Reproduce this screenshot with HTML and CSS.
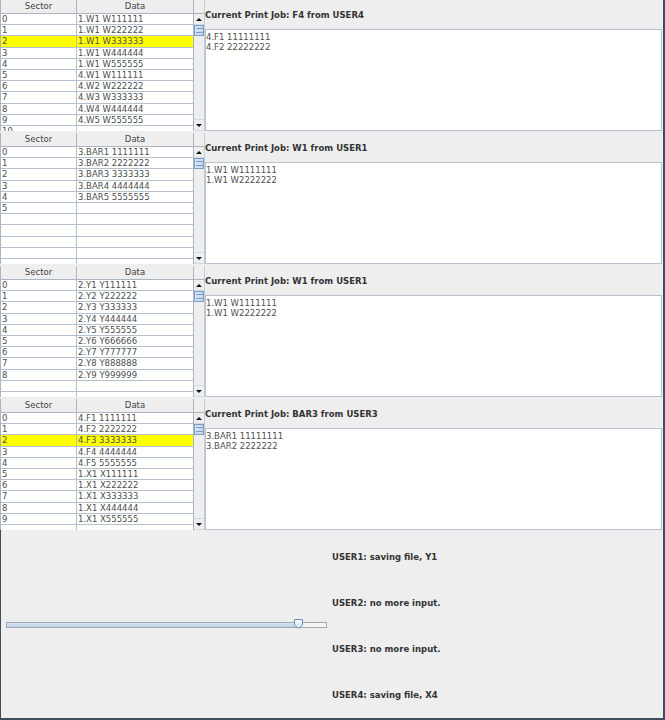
FILE: index.html
```html
<!DOCTYPE html>
<html>
<head>
<meta charset="utf-8">
<link rel="stylesheet" href="styles.css">
</head>
<body>
<div class="window">
  <div class="panels">
    <!-- Panel 1 -->
    <div class="panel">
      <div class="tablepane">
        <div class="tbl">
          <div class="thead"><div class="th c1">Sector</div><div class="th c2">Data</div></div>
          <div class="row"><div class="td c1">0</div><div class="td c2">1.W1 W111111</div></div>
          <div class="row"><div class="td c1">1</div><div class="td c2">1.W1 W222222</div></div>
          <div class="row sel"><div class="td c1">2</div><div class="td c2">1.W1 W333333</div></div>
          <div class="row"><div class="td c1">3</div><div class="td c2">1.W1 W444444</div></div>
          <div class="row"><div class="td c1">4</div><div class="td c2">1.W1 W555555</div></div>
          <div class="row"><div class="td c1">5</div><div class="td c2">4.W1 W111111</div></div>
          <div class="row"><div class="td c1">6</div><div class="td c2">4.W2 W222222</div></div>
          <div class="row"><div class="td c1">7</div><div class="td c2">4.W3 W333333</div></div>
          <div class="row"><div class="td c1">8</div><div class="td c2">4.W4 W444444</div></div>
          <div class="row"><div class="td c1">9</div><div class="td c2">4.W5 W555555</div></div>
          <div class="row"><div class="td c1">10</div><div class="td c2"></div></div>
        </div>
        <div class="vscroll">
          <div class="corner"></div>
          <div class="sbbtn"><span class="arrow-up"></span></div>
          <div class="thumb"><span class="grip"></span></div>
          <div class="track"></div>
          <div class="sbbtn"><span class="arrow-down"></span></div>
        </div>
      </div>
      <div class="jobpane">
        <div class="joblabel">Current Print Job: F4 from USER4</div>
        <div class="textarea">4.F1 11111111<br>4.F2 22222222</div>
      </div>
    </div>

    <!-- Panel 2 -->
    <div class="panel">
      <div class="tablepane">
        <div class="tbl">
          <div class="thead"><div class="th c1">Sector</div><div class="th c2">Data</div></div>
          <div class="row"><div class="td c1">0</div><div class="td c2">3.BAR1 1111111</div></div>
          <div class="row"><div class="td c1">1</div><div class="td c2">3.BAR2 2222222</div></div>
          <div class="row"><div class="td c1">2</div><div class="td c2">3.BAR3 3333333</div></div>
          <div class="row"><div class="td c1">3</div><div class="td c2">3.BAR4 4444444</div></div>
          <div class="row"><div class="td c1">4</div><div class="td c2">3.BAR5 5555555</div></div>
          <div class="row"><div class="td c1">5</div><div class="td c2"></div></div>
          <div class="row"><div class="td c1"></div><div class="td c2"></div></div>
          <div class="row"><div class="td c1"></div><div class="td c2"></div></div>
          <div class="row"><div class="td c1"></div><div class="td c2"></div></div>
          <div class="row"><div class="td c1"></div><div class="td c2"></div></div>
          <div class="row"><div class="td c1"></div><div class="td c2"></div></div>
        </div>
        <div class="vscroll">
          <div class="corner"></div>
          <div class="sbbtn"><span class="arrow-up"></span></div>
          <div class="thumb"><span class="grip"></span></div>
          <div class="track"></div>
          <div class="sbbtn"><span class="arrow-down"></span></div>
        </div>
      </div>
      <div class="jobpane">
        <div class="joblabel">Current Print Job: W1 from USER1</div>
        <div class="textarea">1.W1 W1111111<br>1.W1 W2222222</div>
      </div>
    </div>

    <!-- Panel 3 -->
    <div class="panel">
      <div class="tablepane">
        <div class="tbl">
          <div class="thead"><div class="th c1">Sector</div><div class="th c2">Data</div></div>
          <div class="row"><div class="td c1">0</div><div class="td c2">2.Y1 Y111111</div></div>
          <div class="row"><div class="td c1">1</div><div class="td c2">2.Y2 Y222222</div></div>
          <div class="row"><div class="td c1">2</div><div class="td c2">2.Y3 Y333333</div></div>
          <div class="row"><div class="td c1">3</div><div class="td c2">2.Y4 Y444444</div></div>
          <div class="row"><div class="td c1">4</div><div class="td c2">2.Y5 Y555555</div></div>
          <div class="row"><div class="td c1">5</div><div class="td c2">2.Y6 Y666666</div></div>
          <div class="row"><div class="td c1">6</div><div class="td c2">2.Y7 Y777777</div></div>
          <div class="row"><div class="td c1">7</div><div class="td c2">2.Y8 Y888888</div></div>
          <div class="row"><div class="td c1">8</div><div class="td c2">2.Y9 Y999999</div></div>
          <div class="row"><div class="td c1"></div><div class="td c2"></div></div>
          <div class="row"><div class="td c1"></div><div class="td c2"></div></div>
        </div>
        <div class="vscroll">
          <div class="corner"></div>
          <div class="sbbtn"><span class="arrow-up"></span></div>
          <div class="thumb"><span class="grip"></span></div>
          <div class="track"></div>
          <div class="sbbtn"><span class="arrow-down"></span></div>
        </div>
      </div>
      <div class="jobpane">
        <div class="joblabel">Current Print Job: W1 from USER1</div>
        <div class="textarea">1.W1 W1111111<br>1.W1 W2222222</div>
      </div>
    </div>

    <!-- Panel 4 -->
    <div class="panel">
      <div class="tablepane">
        <div class="tbl">
          <div class="thead"><div class="th c1">Sector</div><div class="th c2">Data</div></div>
          <div class="row"><div class="td c1">0</div><div class="td c2">4.F1 1111111</div></div>
          <div class="row"><div class="td c1">1</div><div class="td c2">4.F2 2222222</div></div>
          <div class="row sel"><div class="td c1">2</div><div class="td c2">4.F3 3333333</div></div>
          <div class="row"><div class="td c1">3</div><div class="td c2">4.F4 4444444</div></div>
          <div class="row"><div class="td c1">4</div><div class="td c2">4.F5 5555555</div></div>
          <div class="row"><div class="td c1">5</div><div class="td c2">1.X1 X111111</div></div>
          <div class="row"><div class="td c1">6</div><div class="td c2">1.X1 X222222</div></div>
          <div class="row"><div class="td c1">7</div><div class="td c2">1.X1 X333333</div></div>
          <div class="row"><div class="td c1">8</div><div class="td c2">1.X1 X444444</div></div>
          <div class="row"><div class="td c1">9</div><div class="td c2">1.X1 X555555</div></div>
          <div class="row"><div class="td c1"></div><div class="td c2"></div></div>
        </div>
        <div class="vscroll">
          <div class="corner"></div>
          <div class="sbbtn"><span class="arrow-up"></span></div>
          <div class="thumb"><span class="grip"></span></div>
          <div class="track"></div>
          <div class="sbbtn"><span class="arrow-down"></span></div>
        </div>
      </div>
      <div class="jobpane">
        <div class="joblabel">Current Print Job: BAR3 from USER3</div>
        <div class="textarea">3.BAR1 11111111<br>3.BAR2 2222222</div>
      </div>
    </div>
  </div>

  <div class="bottom">
    <div class="slidercol">
      <div class="slider">
        <div class="strack">
          <div class="sfill"></div>
        </div>
        <svg class="sthumb" width="11" height="12" viewBox="0 0 11 12">
          <defs>
            <linearGradient id="tg" x1="0" y1="0" x2="0" y2="1">
              <stop offset="0" stop-color="#ffffff"/>
              <stop offset="1" stop-color="#c9daec"/>
            </linearGradient>
          </defs>
          <path d="M1.5 1.5 H9.5 V7 L5.5 10.5 L1.5 7 Z" fill="url(#tg)" stroke="#6f8fbf" stroke-width="1"/>
        </svg>
      </div>
    </div>
    <div class="statuscol">
      <div class="status">USER1: saving file, Y1</div>
      <div class="status">USER2: no more input.</div>
      <div class="status">USER3: no more input.</div>
      <div class="status">USER4: saving file, X4</div>
    </div>
  </div>
</div>
</body>
</html>
```

FILE: styles.css
```css
html, body {
  margin: 0;
  padding: 0;
  background: #eeeeee;
}

body {
  font-family: "DejaVu Sans", "Liberation Sans", sans-serif;
  font-size: 8.5px;
  color: #333333;
}

.window {
  width: 663px;
  height: 718px;
  border-right: 2px solid #3e4c5e;
  border-bottom: 2px solid #3e4c5e;
  display: flex;
  flex-direction: column;
  overflow: hidden;
}

.panels {
  display: grid;
  grid-template-rows: repeat(4, 131px);
  row-gap: 2px;
  height: 530px;
}

.panel {
  display: flex;
  height: 131px;
}

/* ---------- table ---------- */
.tablepane {
  display: flex;
  width: 205px;
  height: 131px;
  flex: none;
  overflow: hidden;
}

.tbl {
  width: 193px;
  border-left: 1px solid #aab4c2;
  box-sizing: border-box;
  background: #ffffff;
  overflow: hidden;
}

.thead {
  display: flex;
  height: 14px;
  box-sizing: border-box;
  border-bottom: 1px solid #aab4c2;
  background: #eeeeee;
}

.th {
  box-sizing: border-box;
  text-align: center;
  line-height: 13px;
  color: #444444;
}

.row {
  display: flex;
  height: 11.2px;
  box-sizing: border-box;
  border-bottom: 1px solid #b4c0cc;
}

.row.sel {
  background: #ffff00;
}

.td {
  box-sizing: border-box;
  line-height: 10px;
  padding-left: 1px;
  white-space: nowrap;
  overflow: hidden;
  color: #4e4e4e;
}

.c1 {
  width: 76px;
  border-right: 1px solid #b4c0cc;
}

.c2 {
  width: 116px;
}

.th.c1 {
  border-right: 1px solid #aab4c2;
}

/* ---------- scrollbar ---------- */
.vscroll {
  width: 12px;
  box-sizing: border-box;
  border-left: 1px solid #aab4c2;
  border-right: 1px solid #c4ccd6;
  display: flex;
  flex-direction: column;
  background: #eeeeee;
}

.corner {
  height: 14px;
  flex: none;
  box-sizing: border-box;
  border-bottom: 1px solid #aab4c2;
}

.sbbtn {
  height: 11px;
  flex: none;
  display: flex;
  align-items: center;
  justify-content: center;
  background: #eeeeee;
  box-sizing: border-box;
  border-bottom: 1px solid #d4dae2;
}

.arrow-up {
  width: 0;
  height: 0;
  border-left: 3px solid transparent;
  border-right: 3px solid transparent;
  border-bottom: 3px solid #111111;
}

.arrow-down {
  width: 0;
  height: 0;
  border-left: 3px solid transparent;
  border-right: 3px solid transparent;
  border-top: 3px solid #111111;
}

.thumb {
  height: 11px;
  flex: none;
  box-sizing: border-box;
  border: 1px solid #7c9cc8;
  background: linear-gradient(to right, #dbe7f3, #c3d6ea);
  display: flex;
  align-items: center;
  justify-content: center;
}

.grip {
  width: 7px;
  height: 3px;
  border-top: 1px solid #7c9cc8;
  border-bottom: 1px solid #7c9cc8;
}

.track {
  flex: 1;
  border-bottom: 1px solid #d4dae2;
}

/* ---------- job pane ---------- */
.jobpane {
  flex: 1;
  display: flex;
  flex-direction: column;
  min-width: 0;
}

.joblabel {
  height: 29px;
  flex: none;
  display: flex;
  align-items: center;
  padding-left: 0;
  padding-top: 1px;
  box-sizing: border-box;
  font-weight: bold;
  color: #333333;
  white-space: nowrap;
}

.textarea {
  flex: 1;
  margin-right: 1px;
  background: #ffffff;
  border: 1px solid #b8c2ce;
  padding: 2px 0 0 0;
  line-height: 10px;
  color: #4e4e4e;
}

/* ---------- bottom ---------- */
.bottom {
  flex: 1;
  display: flex;
  border-left: 1px solid #3e4c5e;
  padding-top: 3px;
  box-sizing: border-box;
}

.slidercol {
  width: 331px;
  flex: none;
  display: flex;
  align-items: center;
  padding-bottom: 2px;
  box-sizing: border-box;
}

.slider {
  position: relative;
  margin-left: 5px;
  width: 321px;
  height: 12px;
  display: flex;
  align-items: center;
}

.strack {
  width: 100%;
  height: 6px;
  box-sizing: border-box;
  border: 1px solid #a2a8b0;
  background: #f4f4f4;
  display: flex;
}

.sfill {
  width: 292px;
  height: 4px;
  box-sizing: border-box;
  background: linear-gradient(#dbe7f3, #b8cde4);
  border-right: 1px solid #8ea6c8;
}

.sthumb {
  position: absolute;
  left: 287px;
  top: -1px;
}

.statuscol {
  flex: 1;
  display: grid;
  grid-template-rows: repeat(4, 46px);
}

.status {
  display: flex;
  align-items: center;
  padding-top: 1px;
  font-weight: bold;
  color: #333333;
  white-space: nowrap;
}
```
